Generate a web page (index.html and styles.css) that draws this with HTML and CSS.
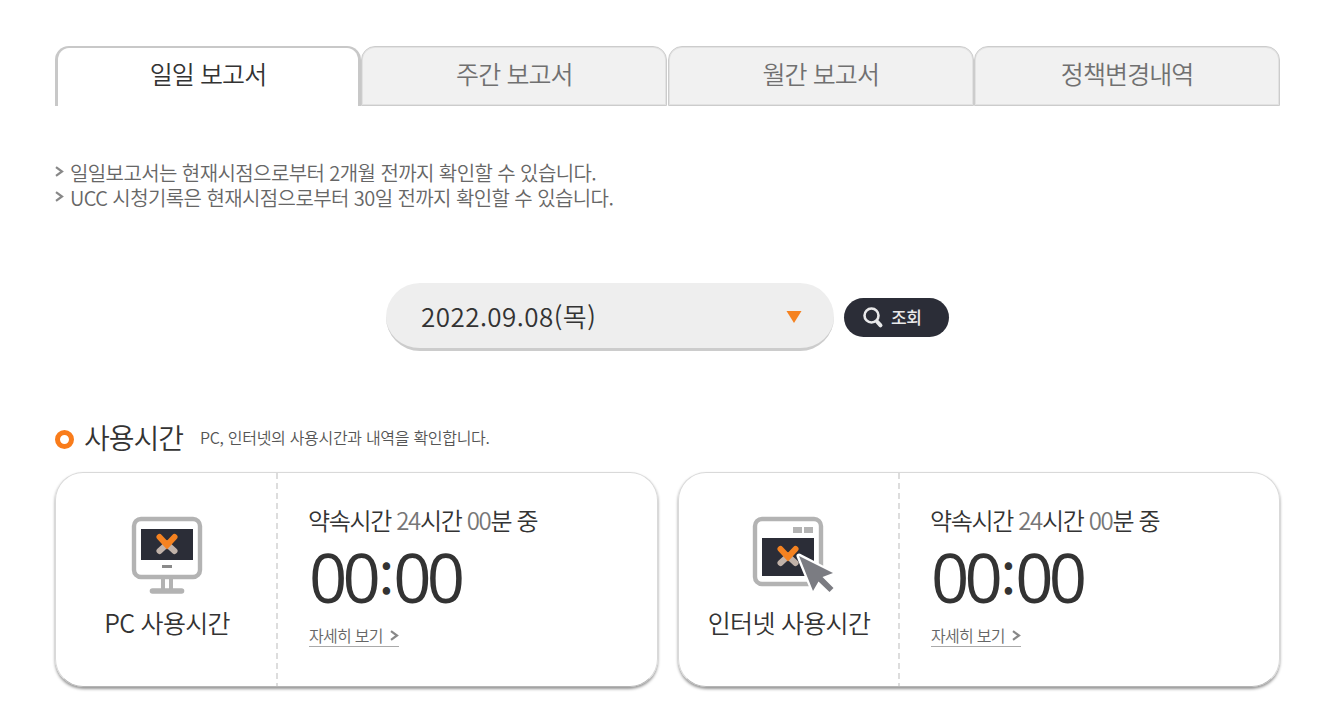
FILE: index.html
```html
<!DOCTYPE html>
<html lang="ko">
<head>
    <meta charset="UTF-8">
    <meta name="viewport" content="width=device-width, initial-scale=1.0">
    <title>일일 보고서</title>
    <link rel="stylesheet" href="styles.css">
</head>
<body>
    <div class="container">
        <ul class="tabs">
            <li class="tab active"><a href="#">일일 보고서</a></li>
            <li class="tab"><a href="#">주간 보고서</a></li>
            <li class="tab"><a href="#">월간 보고서</a></li>
            <li class="tab"><a href="#">정책변경내역</a></li>
        </ul>

        <ul class="notice">
            <li>
                <svg class="arrow" width="9" height="11" viewBox="0 0 9 11"><path d="M1 1.2L7 5.5L1 9.8"/></svg>
                <span>일일보고서는 현재시점으로부터 2개월 전까지 확인할 수 있습니다.</span>
            </li>
            <li>
                <svg class="arrow" width="9" height="11" viewBox="0 0 9 11"><path d="M1 1.2L7 5.5L1 9.8"/></svg>
                <span>UCC 시청기록은 현재시점으로부터 30일 전까지 확인할 수 있습니다.</span>
            </li>
        </ul>

        <div class="search">
            <div class="date-select">
                <span class="date">2022.09.08(목)</span>
                <svg width="16" height="12" viewBox="0 0 16 12"><path d="M0.5 0H15.5L8 12Z" fill="#f58220"/></svg>
            </div>
            <button type="button" class="search-btn">
                <svg width="20" height="21" viewBox="0 0 20 21" fill="none" stroke="#e9e9ea">
                    <circle cx="8.5" cy="8.5" r="7" stroke-width="2.6"/>
                    <path d="M14 14.5L17.5 18.3" stroke-width="4" stroke-linecap="round"/>
                </svg>
                <span>조회</span>
            </button>
        </div>

        <div class="section-title">
            <i class="ring"></i>
            <h2>사용시간</h2>
            <p>PC, 인터넷의 사용시간과 내역을 확인합니다.</p>
        </div>

        <div class="cards">
            <div class="card">
                <div class="card-kind">
                    <svg width="82" height="78" viewBox="0 0 82 78" fill="none">
                        <rect x="8" y="2" width="66" height="58" rx="7" stroke="#b3b3b3" stroke-width="4.4"/>
                        <rect x="15" y="12" width="52" height="31" fill="#2b2d37"/>
                        <path d="M33.5 34L41 27L48.5 34" stroke="#c1b2a9" stroke-width="6" stroke-linecap="round"/>
                        <path d="M33.5 20L41 28L48.5 20" stroke="#f58220" stroke-width="6" stroke-linecap="round"/>
                        <rect x="36" y="48" width="10" height="3" fill="#8a8a8a"/>
                        <path d="M37 61V73M45 61V73" stroke="#b3b3b3" stroke-width="4"/>
                        <path d="M26.5 74H55.5" stroke="#b3b3b3" stroke-width="5.6" stroke-linecap="round"/>
                    </svg>
                    <strong>PC 사용시간</strong>
                </div>
                <div class="card-time">
                    <p class="promise">약속시간 <em>24</em>시간 <em>00</em>분 중</p>
                    <p class="clock">00<span>:</span>00</p>
                    <a href="#" class="more"><span>자세히 보기</span><svg class="arrow" width="9" height="11" viewBox="0 0 9 11"><path d="M1 1.2L7 5.5L1 9.8"/></svg></a>
                </div>
            </div>
            <div class="card">
                <div class="card-kind net">
                    <svg width="82" height="78" viewBox="0 0 82 78" fill="none">
                        <rect x="7" y="2" width="66" height="65" rx="7" stroke="#b3b3b3" stroke-width="4.4"/>
                        <path d="M45 13H54M56 13H65" stroke="#b3b3b3" stroke-width="6"/>
                        <rect x="14" y="21" width="52" height="38" fill="#2b2d37"/>
                        <path d="M32.5 46L40 39L47.5 46" stroke="#c1b2a9" stroke-width="6" stroke-linecap="round"/>
                        <path d="M32.5 32L40 40L47.5 32" stroke="#f58220" stroke-width="6" stroke-linecap="round"/>
                        <path d="M51 39L84 56L75 59L84 70L80 74L71 66L65 73Z" fill="#fff" stroke="#fff" stroke-width="5" stroke-linejoin="round"/>
                        <path d="M51 39L85 56L74.5 60L85.5 71L81.5 75L70.5 64.5L65 74Z" fill="#7b7c82"/>
                    </svg>
                    <strong>인터넷 사용시간</strong>
                </div>
                <div class="card-time">
                    <p class="promise">약속시간 <em>24</em>시간 <em>00</em>분 중</p>
                    <p class="clock">00<span>:</span>00</p>
                    <a href="#" class="more"><span>자세히 보기</span><svg class="arrow" width="9" height="11" viewBox="0 0 9 11"><path d="M1 1.2L7 5.5L1 9.8"/></svg></a>
                </div>
            </div>
        </div>
    </div>
</body>
</html>
```
FILE: styles.css
```css
* {
    box-sizing: border-box;
    margin: 0;
    padding: 0;
}
body {
    font-family: 'Noto Sans CJK KR', 'Noto Sans', sans-serif;
    font-weight: 350;
    color: #333;
    background-color: #fff;
}
ul {
    list-style: none;
}
a {
    color: inherit;
    text-decoration: none;
}
svg {
    display: block;
    flex: none;
    overflow: visible;
}
.container {
    width: 1225px;
    margin-left: 55px;
    padding: 46px 0 14px;
    white-space: nowrap;
}

/* 탭 메뉴 */
.tabs {
    display: grid;
    grid-template-columns: 306px 306px 306px 306px;
    column-gap: 0.4px;
    height: 60px;
}
.tab {
    border: 1px solid #ccc;
    border-radius: 14px 14px 0 0;
    background-color: #f1f1f1;
    box-shadow: inset 0 0 0 1px #e2e2e2;
    color: #707070;
    font-size: 25px;
    line-height: 53px;
    letter-spacing: -0.9px;
    text-align: center;
}
.tab.active {
    border: 2px solid #c8c8c8;
    border-width: 2px 3px 0;
    background-color: #fff;
    box-shadow: none;
    color: #333;
    line-height: 51px;
}

/* 안내 문구 */
.notice {
    margin-top: 54px;
    color: #666;
    font-size: 20px;
    line-height: 25px;
    letter-spacing: -0.59px;
}
.notice li {
    display: flex;
    align-items: center;
    gap: 6px;
    height: 25px;
}
.arrow {
    fill: none;
    stroke: #888;
    stroke-width: 2.2;
}
.notice .arrow {
    margin-bottom: 3px;
}

/* 날짜 조회 */
.search {
    display: flex;
    justify-content: center;
    align-items: center;
    gap: 10px;
    margin-top: 73px;
}
.date-select {
    display: flex;
    justify-content: space-between;
    align-items: center;
    width: 448px;
    height: 68px;
    padding: 0 32px 0 35px;
    border-bottom: 3px solid #ccc;
    border-radius: 34px;
    background-color: #eee;
}
.date {
    font-size: 26px;
    line-height: 60px;
    letter-spacing: 0.45px;
}
.date-select svg {
    margin-top: 3px;
}
.search-btn {
    display: flex;
    align-items: center;
    gap: 8px;
    width: 105px;
    height: 39px;
    padding-left: 19px;
    border: 0;
    border-radius: 20px;
    background-color: #2b2d37;
    color: #e9e9ea;
    font-family: inherit;
    font-size: 17px;
    font-weight: 500;
    line-height: 22px;
    letter-spacing: -0.5px;
    cursor: pointer;
}

/* 사용시간 */
.section-title {
    display: flex;
    align-items: center;
    height: 40px;
    margin-top: 66px;
}
.ring {
    width: 19px;
    height: 19px;
    margin-top: 4px;
    border: 5px solid #f97c1b;
    border-radius: 50%;
}
.section-title h2 {
    margin-left: 10px;
    font-size: 28px;
    font-weight: 350;
    letter-spacing: -1px;
}
.section-title p {
    margin-left: 17px;
    color: #555;
    font-size: 16px;
    letter-spacing: -0.3px;
}
.cards {
    display: grid;
    grid-template-columns: 603px 602px;
    column-gap: 20px;
    margin-top: 15px;
}
.card {
    display: flex;
    height: 215px;
    border: 1px solid #d9d9d9;
    border-bottom-color: #b5b5b5;
    border-radius: 28px;
    box-shadow: 0 2px 3px rgba(0,0,0,0.42);
}
.card-kind {
    display: flex;
    flex-direction: column;
    align-items: center;
    width: 222px;
    padding-top: 44px;
    background: repeating-linear-gradient(to bottom, #ddd 0, #ddd 6px, transparent 6px, transparent 10px) right top / 2px 100% no-repeat;
}
.card-kind.net {
    width: 221px;
    padding-right: 1px;
}
.card-kind strong {
    margin-top: 8px;
    font-size: 25px;
    font-weight: 350;
    line-height: 38px;
    letter-spacing: -0.7px;
}
.card-time {
    padding: 29px 0 0 31px;
}
.promise {
    height: 36px;
    margin-left: -1px;
    font-size: 24px;
    line-height: 36px;
    letter-spacing: -1.35px;
}
.promise em {
    color: #777;
    font-style: normal;
}
.clock {
    display: flex;
    height: 78px;
    font-family: 'Open Sans', 'Noto Sans CJK KR', sans-serif;
    font-size: 67px;
    font-weight: 400;
    line-height: 78px;
    letter-spacing: -4.7px;
}
.clock span {
    width: 17px;
    padding: 0 0 1px 3px;
    font-family: 'Noto Sans CJK KR', sans-serif;
    font-size: 48px;
    font-weight: 500;
    letter-spacing: 0;
}
.more {
    display: inline-flex;
    align-items: center;
    justify-content: space-between;
    width: 90px;
    height: 23px;
    margin-top: 8px;
    border-bottom: 1px solid #aaa;
    color: #666;
    font-size: 16px;
    letter-spacing: -0.7px;
}
```
